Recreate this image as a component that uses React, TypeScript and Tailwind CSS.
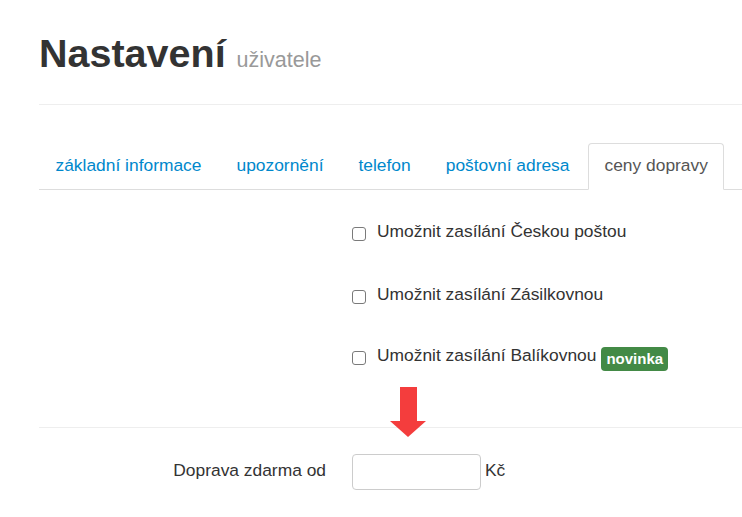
import React from "react";

const tabs = [
  { label: "základní informace", active: false },
  { label: "upozornění", active: false },
  { label: "telefon", active: false },
  { label: "poštovní adresa", active: false },
  { label: "ceny dopravy", active: true },
];

function Check() {
  return (
    <input
      type="checkbox"
      className="appearance-none w-[14px] h-[14px] mt-[4px] border border-[#7a7a7a] rounded-[3px] bg-white shrink-0"
    />
  );
}

export default function App() {
  return (
    <div className="relative min-h-[517px] bg-white pl-[39px] font-['Liberation_Sans',Arial,Helvetica,sans-serif] text-[#333] overflow-hidden">
      <div className="pt-[31px] pb-[29px] border-b border-[#eee]">
        <h1 className="h-[44px] text-[39.5px] leading-[44px] font-bold text-[#333] whitespace-nowrap">
          Nastavení{" "}
          <small className="text-[21.5px] leading-none font-normal text-[#999]">uživatele</small>
        </h1>
      </div>

      <ul className="mt-[38px] flex border-b border-[#ddd] text-[17.4px] leading-[25px]">
        {tabs.map((t) => (
          <li key={t.label} className="-mb-px mr-[2px]">
            <span
              className={
                t.active
                  ? "block px-[15.5px] pt-[9px] pb-[11px] border border-[#ddd] border-b-transparent bg-white rounded-t-[4px] text-[#555] whitespace-nowrap"
                  : "block px-[15.5px] pt-[9px] pb-[11px] border border-transparent rounded-t-[4px] text-[#0088cc] whitespace-nowrap"
              }
            >
              {t.label}
            </span>
          </li>
        ))}
      </ul>

      <div className="text-[17.4px] leading-[25px]">
        <div className="pl-[313px]">
          <div className="mt-[29px] h-[25px] flex items-center">
            <Check />
            <span className="ml-[11px] whitespace-nowrap">Umožnit zasílání Českou poštou</span>
          </div>
          <div className="mt-[38px] h-[25px] flex items-center">
            <Check />
            <span className="ml-[11px] whitespace-nowrap">Umožnit zasílání Zásilkovnou</span>
          </div>
          <div className="mt-[36px] h-[25px] flex items-center">
            <Check />
            <span className="ml-[11px] whitespace-nowrap">Umožnit zasílání Balíkovnou</span>
            <span className="ml-[5px] mt-[7px] inline-block bg-[#438a46] text-white font-bold text-[15px] leading-[17px] px-[5px] pt-[3px] pb-[3.4px] rounded-[4px] whitespace-nowrap">
              novinka
            </span>
          </div>
        </div>

        <div className="mt-[59px] border-t border-[#eee]" />

        <div className="mt-[26px] flex items-center">
          <label className="w-[313px] pr-[26px] text-right mb-[2.6px] whitespace-nowrap">
            Doprava zdarma od
          </label>
          <input
            type="text"
            className="w-[129px] h-[36px] border border-[#ccc] rounded-[4px] bg-white"
          />
          <span className="ml-[4px] mb-[2.6px]">Kč</span>
        </div>
      </div>

      <svg
        className="absolute left-[390px] top-[387px]"
        width="36"
        height="50"
        viewBox="0 0 36 50"
      >
        <polygon points="10,0 27,0 27,34 36,34 18,50 0,34 10,34" fill="#f43d3d" />
      </svg>
    </div>
  );
}
